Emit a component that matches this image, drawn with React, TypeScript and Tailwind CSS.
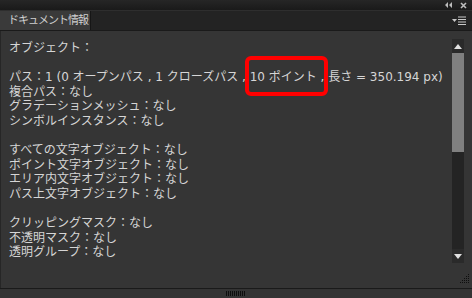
import React from "react";

const lines: (string | null)[] = [
  "オブジェクト：",
  null,
  "PATH",
  "複合パス：なし",
  "グラデーションメッシュ：なし",
  "シンボルインスタンス：なし",
  null,
  "すべての文字オブジェクト：なし",
  "ポイント文字オブジェクト：なし",
  "エリア内文字オブジェクト：なし",
  "パス上文字オブジェクト：なし",
  null,
  "クリッピングマスク：なし",
  "不透明マスク：なし",
  "透明グループ：なし",
];

export default function App() {
  return (
    <div
      className="w-[472px] h-[298px] bg-[#1c1c1c] flex flex-col overflow-hidden text-[#d6d6d6]"
      style={{ fontFamily: '"DejaVu Sans", "Noto Sans CJK JP", sans-serif' }}
    >
      {/* title bar */}
      <div className="h-[11px] bg-gradient-to-b from-[#262626] to-[#1a1a1a] border-b border-[#2e2e2e] flex items-center justify-end gap-[8px] pr-[5px]">
        <svg width="7" height="6" viewBox="0 0 7 6">
          <path d="M3 0 L0 3 L3 6 Z M7 0 L4 3 L7 6 Z" fill="#bdbdbd" />
        </svg>
        <svg width="7" height="7" viewBox="0 0 7 7">
          <path d="M1 1 L6 6 M6 1 L1 6" stroke="#bdbdbd" strokeWidth="1.6" />
        </svg>
      </div>
      {/* tab row */}
      <div className="h-[20px] bg-[#232323] flex items-end border-b border-[#1a1a1a]">
        <div className="h-[19px] w-[91px] bg-[#3a3a3a] border-r border-[#161616] text-[11px] leading-[19px] pl-[8px] text-[#cfcfcf] tracking-[-1px] whitespace-nowrap overflow-hidden">
          ドキュメント情報
        </div>
        <div className="flex-1" />
        <div className="flex items-center gap-[1px] pr-[6px] self-center">
          <svg width="5" height="3" viewBox="0 0 5 3">
            <path d="M0 0 L5 0 L2.5 3 Z" fill="#c8c8c8" />
          </svg>
          <svg width="8" height="9" viewBox="0 0 8 9">
            <path d="M0 1 H8 M0 3.5 H8 M0 6 H8 M0 8.5 H8" stroke="#c8c8c8" strokeWidth="1.2" />
          </svg>
        </div>
      </div>
      {/* content */}
      <div className="flex-1 bg-[#353535] flex border-l border-[#262626] relative">
        <div className="flex-1 pl-[8px] pt-[10px] text-[12px] leading-[14.6px] whitespace-nowrap">
          {lines.map((l, i) =>
            l === null ? (
              <div key={i} className="h-[14.6px]" />
            ) : l === "PATH" ? (
              <div key={i} className="relative">
                パス：1 (0 オープンパス , 1 クローズパス ,{" "}
                <span className="relative">
                  10 ポイント ,
                  <span className="absolute -left-[5px] -right-[4px] -top-[14px] -bottom-[12px] border-[4px] border-[#ff0000] rounded-[6px]" />
                </span>{" "}
                長さ = 350.194 px)
              </div>
            ) : (
              <div key={i}>{l}</div>
            )
          )}
        </div>
        {/* scrollbar */}
        <div className="w-[12px] mt-[8px] mb-[25px] mr-[8px] flex flex-col bg-[#242424]">
          <div className="h-[14px] bg-[#2a2a2a] flex items-center justify-center">
            <svg width="8" height="5" viewBox="0 0 8 5">
              <path d="M4 0 L8 5 L0 5 Z" fill="#e0e0e0" />
            </svg>
          </div>
          <div className="h-[99px] bg-[#808080]" />
          <div className="flex-1" />
          <div className="h-[14px] bg-[#2a2a2a] flex items-center justify-center">
            <svg width="8" height="5" viewBox="0 0 8 5">
              <path d="M0 0 L8 0 L4 5 Z" fill="#e0e0e0" />
            </svg>
          </div>
        </div>
        <svg className="absolute right-[2px] bottom-[4px]" width="10" height="10" viewBox="0 0 10 10">
          {[0, 1, 2, 3, 4].map((r) =>
            [0, 1, 2, 3, 4].map((c) =>
              r + c >= 4 ? <rect key={`${r}-${c}`} x={c * 2} y={r * 2} width="1" height="1" fill="#0e0e0e" /> : null
            )
          )}
        </svg>
      </div>
      {/* bottom bar */}
      <div className="h-[10px] bg-[#343434] border-t border-[#1a1a1a] flex items-center justify-center">
        <svg width="20" height="5" viewBox="0 0 20 5">
          {[0, 1, 2, 3, 4, 5, 6, 7, 8, 9].map((i) => (
            <rect key={i} x={i * 2} y="0" width="1" height="5" fill="#0e0e0e" />
          ))}
        </svg>
      </div>
    </div>
  );
}
